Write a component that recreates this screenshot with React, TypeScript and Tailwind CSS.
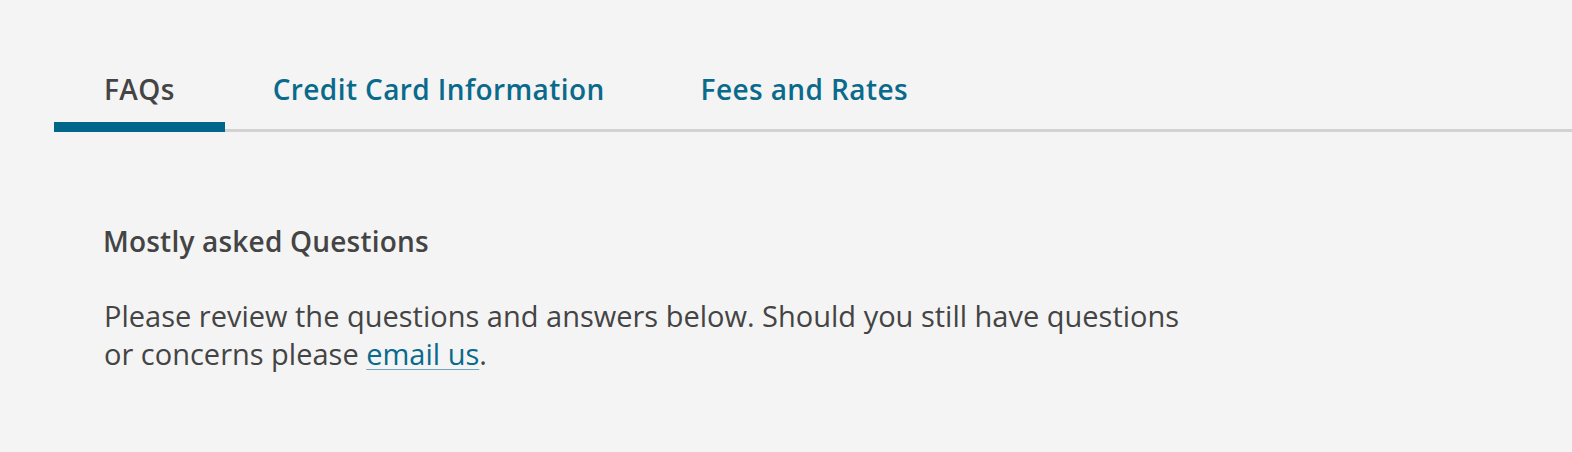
import React from "react";

const tabs = ["FAQs", "Credit Card Information", "Fees and Rates"];

const App = () => {
	const active = 0;

	return (
		<div className="min-h-[452px] bg-[#f4f4f4] font-['Open_Sans',sans-serif] text-[#444444]">
			<div className="ml-[54px] flex items-start border-b-[3px] border-[#d2d2d2] pt-[72px]">
				{tabs.map((tab, index) => (
					<button
						key={tab}
						className={
							index === active
								? "-mb-[3px] border-b-[10px] border-[#01668a] px-[50px] pb-4 text-[28px] leading-[34px] font-semibold tracking-[0.4px] text-[#444444]"
								: "px-[48px] pb-4 text-[28px] leading-[34px] font-semibold tracking-[0.4px] text-[#0a6a8c]"
						}
					>
						{tab}
					</button>
				))}
			</div>
			<div className="pl-[103px] pt-[92px]">
				<h2 className="text-[28px] leading-[34px] font-semibold tracking-[0.2px]">Mostly asked Questions</h2>
				<p className="mt-[39px] w-[1100px] pl-px text-[29px] leading-[38px]">
					Please review the questions and answers below. Should you still have questions or concerns please{" "}
					<a href="#" className="text-[#0a6a8c] underline decoration-[#6fa8bd] decoration-1 underline-offset-[4px]">
						email us
					</a>
					.
				</p>
			</div>
		</div>
	);
};

export default App;
